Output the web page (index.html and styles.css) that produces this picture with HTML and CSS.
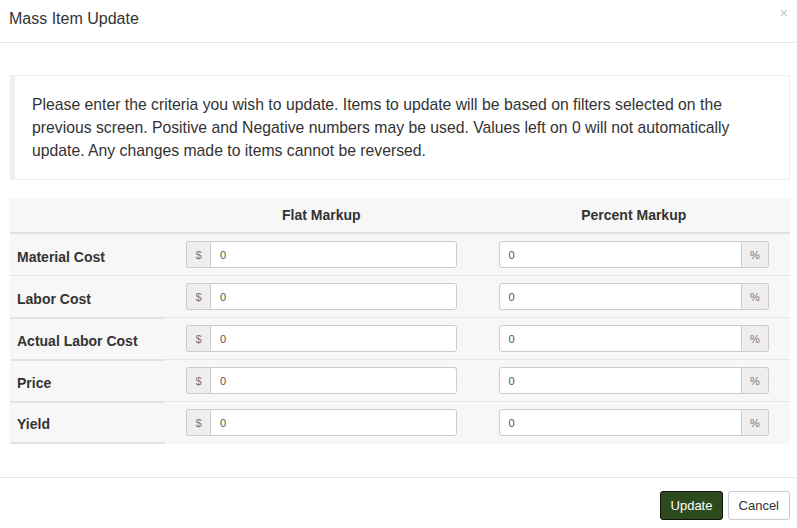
FILE: index.html
```html
<!DOCTYPE html>
<html>
<head>
<meta charset="utf-8">
<link rel="stylesheet" href="styles.css">
</head>
<body>
<div class="modal">
  <div class="modal-header">
    <h4 class="modal-title">Mass Item Update</h4>
    <span class="close">×</span>
  </div>
  <div class="modal-body">
    <div class="note">Please enter the criteria you wish to update. Items to update will be based on filters selected on the previous screen. Positive and Negative numbers may be used. Values left on 0 will not automatically update. Any changes made to items cannot be reversed.</div>
    <table class="grid">
      <thead>
        <tr><th class="lbl"></th><th>Flat Markup</th><th>Percent Markup</th></tr>
      </thead>
      <tbody>
        <tr class="r1">
          <th class="lbl">Material Cost</th>
          <td><div class="ig"><span class="addon pre">$</span><span class="inp">0</span></div></td>
          <td><div class="ig"><span class="inp">0</span><span class="addon post">%</span></div></td>
        </tr>
        <tr>
          <th class="lbl">Labor Cost</th>
          <td><div class="ig"><span class="addon pre">$</span><span class="inp">0</span></div></td>
          <td><div class="ig"><span class="inp">0</span><span class="addon post">%</span></div></td>
        </tr>
        <tr>
          <th class="lbl">Actual Labor Cost</th>
          <td><div class="ig"><span class="addon pre">$</span><span class="inp">0</span></div></td>
          <td><div class="ig"><span class="inp">0</span><span class="addon post">%</span></div></td>
        </tr>
        <tr>
          <th class="lbl">Price</th>
          <td><div class="ig"><span class="addon pre">$</span><span class="inp">0</span></div></td>
          <td><div class="ig"><span class="inp">0</span><span class="addon post">%</span></div></td>
        </tr>
        <tr class="last">
          <th class="lbl">Yield</th>
          <td><div class="ig"><span class="addon pre">$</span><span class="inp">0</span></div></td>
          <td><div class="ig"><span class="inp">0</span><span class="addon post">%</span></div></td>
        </tr>
      </tbody>
    </table>
  </div>
  <div class="modal-footer">
    <button class="btn primary">Update</button>
    <button class="btn">Cancel</button>
  </div>
</div>
</body>
</html>
```
FILE: styles.css
```css
html, body { margin: 0; padding: 0; background: #fff; }
body { font-family: "Liberation Sans", Arial, sans-serif; color: #333; width: 797px; height: 528px; overflow: hidden; }
.modal { width: 797px; }
.modal-header {
  position: relative;
  height: 43px;
  border-bottom: 1px solid #e5e5e5;
  box-sizing: border-box;
  padding: 10px 9px 0;
}
.modal-title { margin: 0; font-size: 16px; font-weight: normal; line-height: 18px; color: #333; }
.close { position: absolute; right: 9px; top: 5px; font-size: 14px; color: #c4c4c4; }
.modal-body { padding: 32px 7px 0 10px; }
.note {
  border: 1px solid #eee;
  border-left: 5px solid #eee;
  padding: 17px 20px 17px 17px;
  font-size: 15.75px;
  line-height: 23px;
  color: #333;
  height: 69px;
}
.grid { width: 780px; border-collapse: collapse; margin-top: 18px; background: #f7f7f7; table-layout: fixed; }
.grid thead th {
  height: 34px;
  padding: 0;
  font-size: 14px;
  font-weight: bold;
  text-align: center;
  border-bottom: 2px solid #e0e0e0;
  vertical-align: middle;
}
.grid thead th.lbl { width: 155px; }
.grid td { padding: 7px 21px; border-bottom: 1px solid #e6e6e6; height: 27px; }
.grid tbody th.lbl {
  text-align: left;
  font-size: 14px;
  font-weight: bold;
  padding: 0 7px 10px;
  line-height: 16px;
  vertical-align: bottom;
  border-bottom: 2px solid #e2e2e2;
}
.grid tr.r1 th.lbl { border-bottom: 1px solid #e6e6e6; }
.grid tr.last td { border-bottom: none; }
.ig { display: flex; height: 27px; font-size: 11px; }
.addon {
  width: 23px;
  background: #eee;
  border: 1px solid #ccc;
  color: #777;
  display: flex; align-items: center; justify-content: center;
}
.addon.pre { border-radius: 3px 0 0 3px; border-right: none; }
.addon.post { width: 26px; border-radius: 0 3px 3px 0; border-left: none; }
.inp {
  flex: 1;
  background: #fff;
  border: 1px solid #ccc;
  color: #555;
  display: flex; align-items: center;
  padding-left: 9px;
}
.addon.pre + .inp { border-radius: 0 3px 3px 0; }
.ig .inp:first-child { border-radius: 3px 0 0 3px; }
.modal-footer {
  margin-top: 33px;
  border-top: 1px solid #e5e5e5;
  padding: 13px 7px 0;
  display: flex;
  justify-content: flex-end;
  gap: 5px;
}
.btn {
  font-family: "Liberation Sans", Arial, sans-serif;
  font-size: 13px;
  height: 29px;
  padding: 0 10px;
  background: #fff;
  border: 1px solid #ccc;
  border-radius: 3px;
  color: #333;
}
.btn.primary { background: #2c4a1c; border: 1px solid #111; color: #fff; width: 63px; }
```
